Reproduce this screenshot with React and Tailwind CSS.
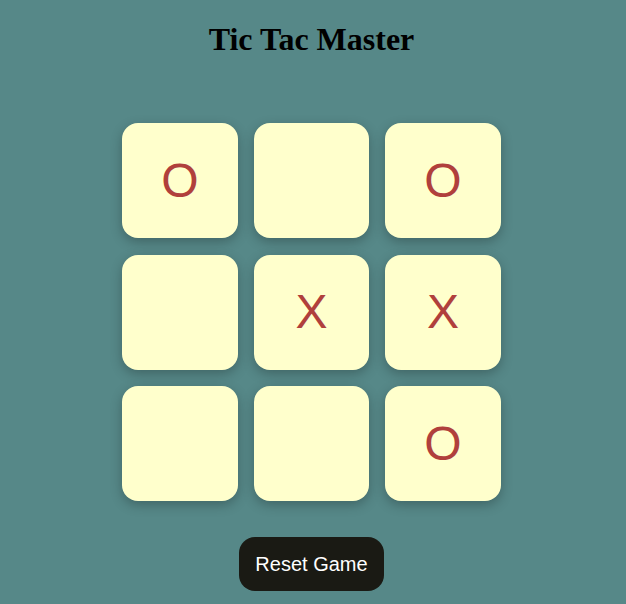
import { useState } from "react";

const initial = ["O", "", "O", "", "X", "X", "", "", "O"];

export default function App() {
  const [board, setBoard] = useState(initial);

  return (
    <div className="min-h-[604px] w-full bg-[#568888] flex flex-col items-center pt-[21px] pr-[3px] font-['Liberation_Sans',Arial,sans-serif]">
      <h1 className="text-[32px] font-bold text-black leading-[36px] font-['Liberation_Serif','Times_New_Roman',serif]">
        Tic Tac Master
      </h1>

      {/* Board */}
      <div className="mt-[66px] grid grid-cols-[repeat(3,115.5px)] gap-x-4 gap-y-[16.5px]">
        {board.map((v, i) => (
          <button
            key={i}
            className="h-[115px] w-[115.5px] rounded-2xl bg-[#ffffcc] shadow-[0_4px_12px_rgba(0,0,0,0.25)] flex items-center justify-center text-[48px] text-[#b0403c]"
          >
            {v}
          </button>
        ))}
      </div>

      <button
        onClick={() => setBoard(Array(9).fill(""))}
        className="mt-[36px] rounded-2xl bg-[#1a1a14] px-4 py-[15px] text-[20px] leading-[24px] text-white"
      >
        Reset Game
      </button>
    </div>
  );
}
